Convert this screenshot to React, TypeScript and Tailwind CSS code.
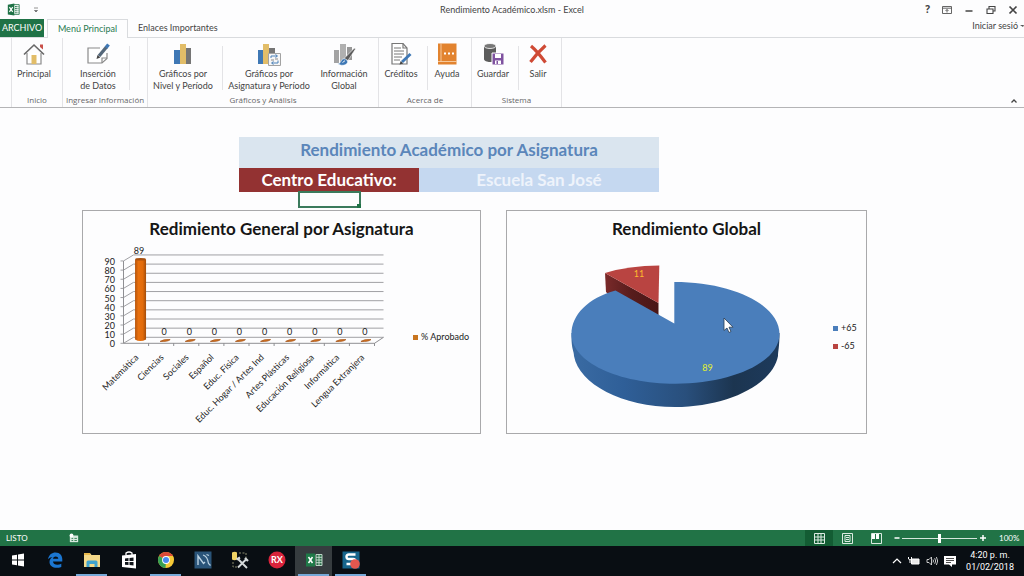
import type { ReactNode } from "react";

const SUBJECTS = [
  { name: "Matemática", value: 89 },
  { name: "Ciencias", value: 0 },
  { name: "Sociales", value: 0 },
  { name: "Español", value: 0 },
  { name: "Educ. Física", value: 0 },
  { name: "Educ. Hogar / Artes Ind", value: 0 },
  { name: "Artes Plásticas", value: 0 },
  { name: "Educación Religiosa", value: 0 },
  { name: "Informática", value: 0 },
  { name: "Lengua Extranjera", value: 0 }
];

const TICKS = [0, 10, 20, 30, 40, 50, 60, 70, 80, 90];

/* ---------- ribbon icons ---------- */

function ExcelLogo({ className }: { className: string }) {
  return (
    <svg viewBox="0 0 16 16" className={className} aria-hidden="true">
      <path d="M8 2h7v12H8z" fill="#fff" stroke="#1f7246" strokeWidth="1" />
      <path d="M10 4.500h2M13 4.500h1M10 7h2M13 7h1M10 9.500h2M13 9.500h1M10 12h2M13 12h1" stroke="#1f7246" strokeWidth="1.400" />
      <path d="M1 2l8-1.500v15L1 14z" fill="#1f7246" />
      <path d="M3 5l4 6M7 5l-4 6" stroke="#fff" strokeWidth="1.500" />
    </svg>
  );
}

function HomeIcon() {
  return (
    <svg viewBox="0 0 24 24" className="size-6" aria-hidden="true">
      <path d="M18 2.500h3v5l-3-2.500z" fill="#c9504a" />
      <path d="M5 11v11h14V11" fill="#fff" stroke="#8a8a8a" strokeWidth="1.200" />
      <path d="M2 12.500L12 3l10 9.500" fill="none" stroke="#686868" strokeWidth="1.600" />
      <path d="M9.500 13h5v9h-5z" fill="#e2bd68" />
    </svg>
  );
}

function InsertIcon() {
  return (
    <svg viewBox="0 0 24 24" className="size-6" aria-hidden="true">
      <path d="M14 6H2v15h14l5-4.500V11" fill="#fff" stroke="#8a8a8a" strokeWidth="1.200" />
      <path d="M16 21v-5h5" fill="none" stroke="#8a8a8a" strokeWidth="1.200" />
      <path d="M13 14L20.500 5" stroke="#54677a" strokeWidth="3.400" />
      <path d="M20 5.600L22.500 2.500" stroke="#3f78b5" strokeWidth="3.400" />
      <path d="M10.500 17l1-4 2.800 2.400z" fill="#444" />
    </svg>
  );
}

function BarsIcon() {
  return (
    <svg viewBox="0 0 24 24" className="size-6" aria-hidden="true">
      <path d="M3 8h6v14H3z" fill="#3f78b5" />
      <path d="M9 2h6v20H9z" fill="#e2bd68" />
      <path d="M15 6h5v16h-5z" fill="#757575" />
    </svg>
  );
}

function BarsLinkIcon() {
  return (
    <svg viewBox="0 0 24 24" className="size-6" aria-hidden="true">
      <path d="M1 8h5v14H1z" fill="#3f78b5" />
      <path d="M6 2h6v20H6z" fill="#e2bd68" />
      <path d="M12 6h6v16h-6z" fill="#757575" />
      <path d="M11.500 11.500h12v12h-12z" fill="#f6f6f6" stroke="#a2a2a2" strokeWidth="1" />
      <path d="M14 16v-2h6M18.500 12.500l2 1.500-2 1.500M21 18.500v2.500h-6M16.500 19.500l-2 1.500 2 1.500" fill="none" stroke="#4b80b8" strokeWidth="1" />
      <path d="M14 18h3M18 17h3" stroke="#888" strokeWidth="1" />
    </svg>
  );
}

function BrushIcon() {
  return (
    <svg viewBox="0 0 24 24" className="size-6" aria-hidden="true">
      <path d="M2 8h5v13H2z" fill="#a3a3a3" />
      <path d="M8 2h6v19H8z" fill="#b0b0b0" />
      <path d="M15 5h5v13h-5z" fill="#989898" />
      <path d="M12 16.500L22.500 6l1 1-7.500 11.500z" fill="#5b5b5b" stroke="#fff" strokeWidth=".6" />
      <path d="M5.500 21.500c3 .5 3-2 4.500-4 2.500-2 6 .5 5.500 3-1.500 3.500-7 3.500-10 1z" fill="#3f78b5" stroke="#fff" strokeWidth=".5" />
      <path d="M10.500 20.500l2.500-1.800" stroke="#fff" strokeWidth=".9" />
    </svg>
  );
}

function CreditsIcon() {
  return (
    <svg viewBox="0 0 24 24" className="size-6" aria-hidden="true">
      <path d="M3 1.500h11l4 4.500v16H3z" fill="#fff" stroke="#777" strokeWidth="1.200" />
      <path d="M14 1.500V6h4" fill="none" stroke="#777" strokeWidth="1.200" />
      <path d="M5 6h7M5 9h10M5 12h10M5 15h8M5 18h6" stroke="#777" strokeWidth="1" />
      <path d="M13 20l8.500-8" stroke="#3f78b5" strokeWidth="3" />
      <path d="M10.500 22.500l1.200-3.600 2.600 2.600z" fill="#444" />
    </svg>
  );
}

function HelpBookIcon() {
  return (
    <svg viewBox="0 0 24 24" className="size-6" aria-hidden="true">
      <path d="M3 1.500h18.500v21H3z" fill="#e2832f" />
      <path d="M6 1.500v18M3 19.500h18.500" stroke="#fbd9b5" strokeWidth=".8" />
      <path d="M9 11.500h2M13 11.500h2M17 11.500h2" stroke="#fff" strokeWidth="2" />
    </svg>
  );
}

function SaveIcon() {
  return (
    <svg viewBox="0 0 24 24" className="size-6" aria-hidden="true">
      <path d="M3 4v13c0 4 12 4 12 0V4z" fill="#5c5c5c" />
      <ellipse cx="9" cy="4" rx="6" ry="2.500" fill="#777" stroke="#fff" strokeWidth=".8" />
      <path d="M11 11h12v12H11z" fill="#7f52a0" stroke="#fff" strokeWidth="1" />
      <path d="M14 12h6v4h-6zM14 18.500h6V22h-6z" fill="#fff" />
      <path d="M15.500 19h1.500v3h-1.500z" fill="#7f52a0" />
    </svg>
  );
}

function ExitIcon() {
  return (
    <svg viewBox="0 0 24 24" className="size-6" aria-hidden="true">
      <path d="M5 4Q11 9 19.500 20.500M19.500 3.500Q12 10 4.500 20" fill="none" stroke="#cf4a35" strokeWidth="3.200" />
    </svg>
  );
}

/* ---------- ribbon ---------- */

function RibbonButton({ icon, lines, className }: { icon: ReactNode; lines: string[]; className: string }) {
  return (
    <button
      type="button"
      className={`flex flex-col items-center pt-1 text-[9px] leading-3 whitespace-nowrap text-[#444] ${className}`}
    >
      {icon}
      <span className="mt-0.5">
        {lines.map((l) => (
          <span key={l} className="block">
            {l}
          </span>
        ))}
      </span>
    </button>
  );
}

function RibbonGroup({ title, className, children }: { title: string; className: string; children: ReactNode }) {
  return (
    <section className={`flex shrink-0 flex-col border-r border-[#e3e3e6] ${className}`}>
      <div className="flex flex-1">{children}</div>
      <h2 className="pb-px text-center font-['Open_Sans',sans-serif] text-[8px] leading-3 whitespace-nowrap text-[#666]">
        {title}
      </h2>
    </section>
  );
}

function Divider({ className = "" }: { className?: string }) {
  return <span className={`mt-2 h-11 w-px bg-[#e3e3e6] ${className}`} />;
}

function TitleBar() {
  return (
    <header className="grid h-[19px] grid-cols-[1fr_auto_1fr] items-center text-[9px] text-[#444]">
      <div className="flex items-center gap-3 pl-[7px]">
        <ExcelLogo className="size-[13px]" />
        <button type="button" aria-label="Personalizar barra">
          <svg viewBox="0 0 8 8" className="size-2">
            <path d="M2 2h4M2.500 4.500h3L4 6z" fill="#666" stroke="#666" strokeWidth=".7" />
          </svg>
        </button>
      </div>
      <h1>Rendimiento Académico.xlsm - Excel</h1>
      <div className="flex items-center justify-end gap-3 pr-1.5">
        <button type="button" className="font-['Open_Sans',sans-serif] text-[10px] font-bold">
          ?
        </button>
        <button type="button" aria-label="Opciones de la cinta">
          <svg viewBox="0 0 10 10" className="size-2.5">
            <path d="M.5 1.500h9v7h-9zM.5 3.200h9M5 7.500v-3M3.500 6L5 4.500 6.500 6" fill="none" stroke="#555" strokeWidth=".9" />
          </svg>
        </button>
        <button type="button" aria-label="Minimizar">
          <svg viewBox="0 0 10 10" className="size-2.5">
            <path d="M1.500 6h7" stroke="#444" strokeWidth="1.500" />
          </svg>
        </button>
        <button type="button" aria-label="Restaurar">
          <svg viewBox="0 0 10 10" className="size-2.5">
            <path d="M1 4h6v4.500H1zM3 4V1.500h6V6H7" fill="none" stroke="#444" strokeWidth="1.100" />
          </svg>
        </button>
        <button type="button" aria-label="Cerrar">
          <svg viewBox="0 0 10 10" className="size-2.5">
            <path d="M1.500 1.500l7 7M8.500 1.500l-7 7" stroke="#444" strokeWidth="1.700" />
          </svg>
        </button>
      </div>
    </header>
  );
}

function Tabs() {
  return (
    <nav className="flex h-[19px] items-stretch border-b border-[#d9dbde] text-[9px] whitespace-nowrap">
      <button type="button" className="w-11 bg-[#1f7246] text-white">
        ARCHIVO
      </button>
      <button
        type="button"
        className="-mb-px ml-[3px] w-[81px] border border-b-0 border-[#d9dbde] bg-[#fdfdfe] text-[#2a7a50]"
      >
        Menú Principal
      </button>
      <button type="button" className="ml-2.5 text-[#444]">
        Enlaces Importantes
      </button>
      <a href="#sesion" className="ml-auto flex items-center gap-0.5 pb-1 text-[#444]">
        Iniciar sesió
        <svg viewBox="0 0 4 4" className="size-1">
          <path d="M0 1h4L3 3z" fill="#555" />
        </svg>
      </a>
    </nav>
  );
}

function Ribbon() {
  return (
    <div className="flex h-[70px] overflow-hidden border-b border-[#b4b4b6] pl-[11px]">
      <RibbonGroup title="Inicio" className="w-[52px] border-l">
        <RibbonButton icon={<HomeIcon />} lines={["Principal"]} className="w-11" />
      </RibbonGroup>
      <RibbonGroup title="Ingresar Información" className="w-[85px]">
        <RibbonButton icon={<InsertIcon />} lines={["Inserción", "de Datos"]} className="ml-1 w-[62px]" />
        <Divider />
      </RibbonGroup>
      <RibbonGroup title="Gráficos y Análisis" className="w-[231px]">
        <RibbonButton icon={<BarsIcon />} lines={["Gráficos por", "Nivel y Período"]} className="w-[70px]" />
        <Divider className="ml-1" />
        <RibbonButton icon={<BarsLinkIcon />} lines={["Gráficos por", "Asignatura y Período"]} className="w-[92px]" />
        <RibbonButton icon={<BrushIcon />} lines={["Información", "Global"]} className="w-[58px]" />
      </RibbonGroup>
      <RibbonGroup title="Acerca de" className="w-[93px]">
        <RibbonButton icon={<CreditsIcon />} lines={["Créditos"]} className="w-11" />
        <Divider className="ml-1" />
        <RibbonButton icon={<HelpBookIcon />} lines={["Ayuda"]} className="w-[38px]" />
      </RibbonGroup>
      <RibbonGroup title="Sistema" className="w-[90px]">
        <RibbonButton icon={<SaveIcon />} lines={["Guardar"]} className="w-[42px]" />
        <Divider className="ml-1" />
        <RibbonButton icon={<ExitIcon />} lines={["Salir"]} className="w-[38px]" />
      </RibbonGroup>
      <button type="button" aria-label="Contraer la cinta" className="mt-auto mr-1.5 mb-0.5 ml-auto">
        <svg viewBox="0 0 8 8" className="size-2">
          <path d="M1.500 5.500L4 3l2.500 2.500" fill="none" stroke="#444" strokeWidth="1.300" />
        </svg>
      </button>
    </div>
  );
}

/* ---------- charts ---------- */

function SubjectChart() {
  const step = 25.1;
  const tickY = (t: number) => 104.300 - t * 0.915;
  return (
    <svg viewBox="0 0 326 194" className="h-[194px] w-[326px] shrink-0 overflow-visible" role="img" aria-label="% Aprobado">
      {TICKS.map((t) => (
        <g key={t}>
          <path d={`M37.500 ${tickY(t)}h3l10-6H300.500`} fill="none" stroke="#a0a0a4" strokeWidth="1" />
          <text x="32" y={tickY(t) + 4} textAnchor="end" fontSize="9" fill="#222">
            {t}
          </text>
        </g>
      ))}
      <path d={`M40.500 22V104.300H291.500l9-6`} fill="none" stroke="#8f8f93" strokeWidth="1" />
      {SUBJECTS.map((s, i) => {
        const cx = 40.500 + step * (i + 0.5);
        return (
          <g key={s.name}>
            <path d={`M${cx + step / 2} 104v3`} stroke="#8f8f93" />
            {s.value > 0 ? (
              <>
                <path d={`M${cx - 1} 20.500v80q5 3 11 0v-80z`} fill="url(#cyl)" />
                <ellipse cx={cx + 4.500} cy="20.300" rx="5.500" ry="1.300" fill="#a8500f" />
              </>
            ) : (
              <path
                d={`M${cx - 1} 102.400q3-2.400 10-1.800q-2 2.200-10 1.800z`}
                fill="#d9751f"
                stroke="#a5561b"
                strokeWidth=".8"
              />
            )}
            <text x={cx + 3} y={s.value > 0 ? 15 : 96} textAnchor="middle" fontSize="9" fill="#222">
              {s.value}
            </text>
            <text
              transform={`translate(${cx + 3} 119) rotate(-45)`}
              textAnchor="end"
              fontSize="9"
              fill="#222"
            >
              {s.name}
            </text>
          </g>
        );
      })}
      <defs>
        <linearGradient id="cyl">
          <stop offset="0" stopColor="#b4540c" />
          <stop offset=".3" stopColor="#e8700f" />
          <stop offset=".7" stopColor="#e26b0a" />
          <stop offset="1" stopColor="#a34c0a" />
        </linearGradient>
      </defs>
    </svg>
  );
}

function GlobalPie() {
  return (
    <svg viewBox="0 0 320 194" className="h-[194px] w-[320px] shrink-0" role="img" aria-label="Rendimiento Global">
      <defs>
        <linearGradient id="rim">
          <stop offset="0" stopColor="#3a6ba3" />
          <stop offset=".25" stopColor="#2f5f98" />
          <stop offset=".55" stopColor="#294f7c" />
          <stop offset=".78" stopColor="#1c3550" />
          <stop offset="1" stopColor="#1d3a5c" />
        </linearGradient>
        <linearGradient id="cut">
          <stop offset="0" stopColor="#7a2a2a" />
          <stop offset=".5" stopColor="#571c1c" />
          <stop offset="1" stopColor="#4a1717" />
        </linearGradient>
      </defs>
      <path d="M98 34L151.500 64v13L130 82 99 53z" fill="url(#cut)" />
      <path d="M98 34Q122 26.500 152.300 26.500L151.500 64z" fill="#b94441" />
      <path d="M64.500 94C64 110 67 112 67 117C72 145 115 168 168 168S266 145 271 117C271 112 272.500 108 272.500 94z" fill="url(#rim)" />
      <path
        d="M167.300 84.500V43C226 43 272.500 66 272.500 95C272.500 123 226 144.700 168.500 144.700S64.500 123 64.500 95C64.500 76 81 59 108.500 51.500z"
        fill="#4a7ebb"
      />
      <text x="132" y="38" textAnchor="middle" fontSize="9" fill="#ffb92e">
        11
      </text>
      <text x="200.500" y="132" textAnchor="middle" fontSize="9" fill="#e4f22e">
        89
      </text>
      <path d="M217 79v12.500l3-2.500 2 4.500 2-1-2-4.300h4z" fill="#fff" stroke="#2a3c52" strokeWidth=".8" />
    </svg>
  );
}

function ChartCard({ title, className, children }: { title: string; className: string; children: ReactNode }) {
  return (
    <figure className={`border border-[#a9a9ab] pt-2 ${className}`}>
      <figcaption className="text-center text-[17px] leading-5 font-bold text-[#161616]">{title}</figcaption>
      <div className="flex items-center">{children}</div>
    </figure>
  );
}

function LegendItem({ swatch, label }: { swatch: string; label: string }) {
  return (
    <li className="flex items-center gap-[3px] text-[9px] leading-3 whitespace-nowrap text-[#222]">
      <span className={`size-[5px] ${swatch}`} />
      {label}
    </li>
  );
}

function Sheet() {
  return (
    <main className="flex-1 pt-[29px] pl-[82px]">
      <div className="ml-[157px] w-[420px] text-center text-[17px] font-bold">
        <h2 className="h-[31px] bg-[#dae5ef] pt-[3px] leading-5 text-[#5b86ba]">Rendimiento Académico por Asignatura</h2>
        <div className="grid h-[23px] grid-cols-[180px_1fr] leading-6 text-white">
          <div className="bg-[#933232]">Centro Educativo:</div>
          <div className="bg-[#c5d8f0] text-[#eef3fb]">Escuela San José</div>
        </div>
      </div>
      <div className="relative ml-[216px] h-[17px] w-[63px] border-2 border-[#3b7a5c]">
        <span className="absolute -right-0.5 -bottom-0.5 size-1 bg-[#1f7246]" />
      </div>
      <div className="mt-0.5 flex items-start gap-[25px]">
        <ChartCard title="Redimiento General por Asignatura" className="w-[399px]">
          <SubjectChart />
          <ul className="ml-1 pt-0.5">
            <LegendItem swatch="bg-[#c8751f]" label="% Aprobado" />
          </ul>
        </ChartCard>
        <ChartCard title="Rendimiento Global" className="w-[361px]">
          <GlobalPie />
          <ul className="ml-1.5 flex flex-col gap-1.5 pt-0.5">
            <LegendItem swatch="bg-[#4a7ebb]" label="+65" />
            <LegendItem swatch="bg-[#b94441]" label="-65" />
          </ul>
        </ChartCard>
      </div>
    </main>
  );
}

/* ---------- status bar and taskbar ---------- */

function StatusBar() {
  return (
    <footer className="flex h-4 items-center bg-[#217346] text-[8px] text-white">
      <span className="w-[69px] pl-1.5">LISTO</span>
      <svg viewBox="0 0 12 12" className="size-2.5">
        <path d="M1 3h10v8H1z" fill="#d6e8de" />
        <circle cx="3" cy="3" r="2.300" fill="#fff" />
        <path d="M3 6.500h2M6.500 6.500h3M3 9h2M6.500 9h3" stroke="#217346" />
      </svg>
      <div className="ml-auto flex h-full items-center">
        <button type="button" aria-label="Normal" className="flex h-full w-7 items-center justify-center bg-[#135c33]">
          <svg viewBox="0 0 11 11" className="size-[11px]">
            <path d="M.5.5h10v10H.5zM4 .5v10M7 .5v10M.5 4h10M.5 7h10" fill="none" stroke="#dcebe2" strokeWidth="1" />
          </svg>
        </button>
        <button type="button" aria-label="Diseño de página" className="flex h-full w-[29px] items-center justify-center">
          <svg viewBox="0 0 11 11" className="size-[11px]">
            <path d="M.5.5h10v10H.5zM3 2.500h5v6H3zM4 4.500h3M4 6.500h3" fill="none" stroke="#dcebe2" strokeWidth="1" />
          </svg>
        </button>
        <button type="button" aria-label="Saltos de página" className="flex h-full w-7 items-center justify-center">
          <svg viewBox="0 0 11 11" className="size-[11px]">
            <path d="M.5.5h10v10H.5z" fill="none" stroke="#dcebe2" strokeWidth="1" />
            <path d="M1 1h3v5H1zM5 1h3v5H5z" fill="#fff" />
          </svg>
        </button>
        <button type="button" aria-label="Alejar" className="ml-0.5 flex w-2.5 justify-center">
          <svg viewBox="0 0 8 8" className="size-2">
            <path d="M1.500 4h5" stroke="#fff" strokeWidth="1.500" />
          </svg>
        </button>
        <input
          type="range"
          aria-label="Zoom"
          min={0}
          max={200}
          defaultValue={100}
          className="h-3 w-[75px] appearance-none bg-transparent [&::-webkit-slider-runnable-track]:h-px [&::-webkit-slider-runnable-track]:bg-[#d5e6dc] [&::-webkit-slider-thumb]:-mt-1 [&::-webkit-slider-thumb]:h-[9px] [&::-webkit-slider-thumb]:w-[3px] [&::-webkit-slider-thumb]:appearance-none [&::-webkit-slider-thumb]:bg-white"
        />
        <button type="button" aria-label="Acercar" className="flex w-3 justify-center">
          <svg viewBox="0 0 8 8" className="size-2">
            <path d="M1 4h6M4 1v6" stroke="#fff" strokeWidth="1.500" />
          </svg>
        </button>
        <span className="ml-2.5 w-[25px]">100%</span>
      </div>
    </footer>
  );
}

function TaskButton({
  label,
  open,
  active,
  children
}: {
  label: string;
  open?: boolean;
  active?: boolean;
  children: ReactNode;
}) {
  return (
    <button
      type="button"
      aria-label={label}
      className={`flex w-[37px] flex-col items-center justify-end ${active ? "bg-[#363c3f]" : ""}`}
    >
      <svg viewBox="0 0 20 20" className="mb-1 size-5">
        {children}
      </svg>
      <span className={`h-0.5 w-[31px] ${open ? "bg-[#76a9d8]" : ""}`} />
    </button>
  );
}

function Taskbar() {
  return (
    <nav className="flex h-[30px] bg-[#090e13] text-white">
      <div className="-ml-px flex">
        <TaskButton label="Inicio">
          <path d="M4 5.500l5-.800V9.500H4zM10 4.500l6-.900v5.900h-6zM4 10.500h5v4.800l-5-.800zM10 10.500h6v6l-6-.900z" fill="#fff" />
        </TaskButton>
        <TaskButton label="Edge">
          <path
            d="M3 9.200C4 4.500 7 2.500 10.500 2.500 15 2.500 17.300 5.500 17.300 9.500v2H8c.200 3.500 5 4 8.300 2.200v3.200C11 19 4.500 17.500 4.500 12 4.500 9.500 6 8 7.500 7 5.500 7.300 4 8 3 9.200zM8 8.800h5.300C13.200 5.800 8.500 5.600 8 8.800z"
            fill="#1b76d0"
          />
        </TaskButton>
        <TaskButton label="Explorador" open>
          <path d="M2 3h6l1.500 2H18v12H2z" fill="#f4d98a" />
          <path d="M2 3h6v2H2z" fill="#e8b84a" />
          <path d="M4.500 17v-5q0-1.500 1.500-1.500h8q1.500 0 1.500 1.500v5h-3v-3h-5v3z" fill="#3fa3cf" />
        </TaskButton>
        <TaskButton label="Tienda">
          <path d="M7 5V3q3-2 6 0v2" fill="none" stroke="#fff" strokeWidth="1.300" />
          <path d="M3 5.500l14-1.500v14.500L3 17z" fill="#fff" />
          <path d="M6 8.500l3.500-.400v3H6zM10.500 8l4-.400v3.500h-4zM6 12h3.500v3L6 14.700zM10.500 12h4v3.500l-4-.400z" fill="#10151a" />
        </TaskButton>
        <TaskButton label="Chrome" open>
          <circle cx="10" cy="10" r="8" fill="#f6c936" />
          <path d="M10 10L3.100 6A8 8 0 0 1 16.900 6z" fill="#dc4a38" />
          <path d="M10 10L3.100 6A8 8 0 0 0 9.500 18z" fill="#36a054" />
          <path d="M10 6h7l1 4-5 1z" fill="#f6c936" />
          <circle cx="10" cy="10" r="3.900" fill="#fff" />
          <circle cx="10" cy="10" r="3" fill="#4a8af0" />
        </TaskButton>
        <TaskButton label="MySQL Workbench">
          <path d="M1.500 1.500h17v17h-17z" fill="#2a5479" />
          <path d="M5 15V6l5.500 7.500L12 12" fill="none" stroke="#bcd2e2" strokeWidth="1.400" />
          <path d="M10 5c4 1 5 5 5.500 8.500l2 2M13.500 4.500l2.500 1" fill="none" stroke="#bcd2e2" strokeWidth="1.200" />
        </TaskButton>
        <TaskButton label="Herramientas SQL">
          <path d="M2 2.500q3-1.500 5 0v7q-2.500 1.500-5 0z" fill="#f0d264" />
          <path d="M9 3h7v6M3 12v5h4" fill="none" stroke="#8c8c70" strokeDasharray="2 1.500" />
          <path d="M8 9l9 9M16.500 9L8 17.500" stroke="#d5d9da" strokeWidth="1.900" />
          <path d="M6.500 9.500L10 7.500M15 8l3 3" stroke="#d5d9da" strokeWidth="2.200" />
        </TaskButton>
        <TaskButton label="RX">
          <circle cx="10" cy="10" r="8.500" fill="#d9233b" />
          <text x="10" y="13" textAnchor="middle" fontSize="9" fontWeight="700" fill="#fff">
            RX
          </text>
        </TaskButton>
        <TaskButton label="Excel" open active>
          <path d="M2 3.500h9v13H2z" fill="#1f7a48" />
          <path d="M4.500 7l4 6M8.500 7l-4 6" stroke="#fff" strokeWidth="1.500" />
          <path d="M12 4.500h6v11h-6zM15 4.500v11M12 7.300h6M12 10h6M12 12.700h6" fill="#2a6a48" stroke="#c8e3d3" strokeWidth=".9" />
        </TaskButton>
        <TaskButton label="Grabador" open>
          <path d="M1.500 1.500h17v17h-17z" fill="#17658c" />
          <path d="M14.500 4.500H8q-2.500 0-2.500 2.300T8 9h4q2.500 0 2.500 2.300T12 14H5.500" fill="none" stroke="#fff" strokeWidth="2.400" />
          <circle cx="14" cy="14" r="4.800" fill="#e2574f" />
        </TaskButton>
      </div>

      <div className="ml-auto flex items-center gap-1.5 pr-2.5">
        <svg viewBox="0 0 10 10" className="size-2.5">
          <path d="M1 7l4-4 4 4" fill="none" stroke="#fff" strokeWidth="1.200" />
        </svg>
        <svg viewBox="0 0 12 10" className="h-2.5 w-3">
          <path d="M3.500 3H11v5H3.500z" fill="#e9e9e9" stroke="#fff" />
          <path d="M.5 1v2q1.500 2 3 0V1M2 4v3" fill="none" stroke="#fff" />
        </svg>
        <svg viewBox="0 0 12 10" className="h-2.5 w-3">
          <path d="M1 3.500h2L5.500 1v8L3 6.500H1zM7 3.500q1 1.500 0 3M8.700 2.200q2 2.800 0 5.600M10.400 1q2.600 4 0 8" fill="none" stroke="#ddd" strokeWidth=".9" />
        </svg>
        <svg viewBox="0 0 12 12" className="size-3">
          <path d="M0 1h12v8.500H8V12L5 9.500H0z" fill="#fff" />
          <path d="M2 3.500h8M2 5.500h8M2 7.500h5" stroke="#222" strokeWidth=".8" />
        </svg>
        <time className="ml-1 text-center font-[Roboto,sans-serif] text-[9px] leading-3">
          4:20 p. m.
          <br />
          01/02/2018
        </time>
      </div>
    </nav>
  );
}

export default function App() {
  return (
    <div className="flex min-h-screen flex-col bg-[#fdfdfe] font-['Lato','Open_Sans',sans-serif]">
      <TitleBar />
      <Tabs />
      <Ribbon />
      <Sheet />
      <StatusBar />
      <Taskbar />
    </div>
  );
}
